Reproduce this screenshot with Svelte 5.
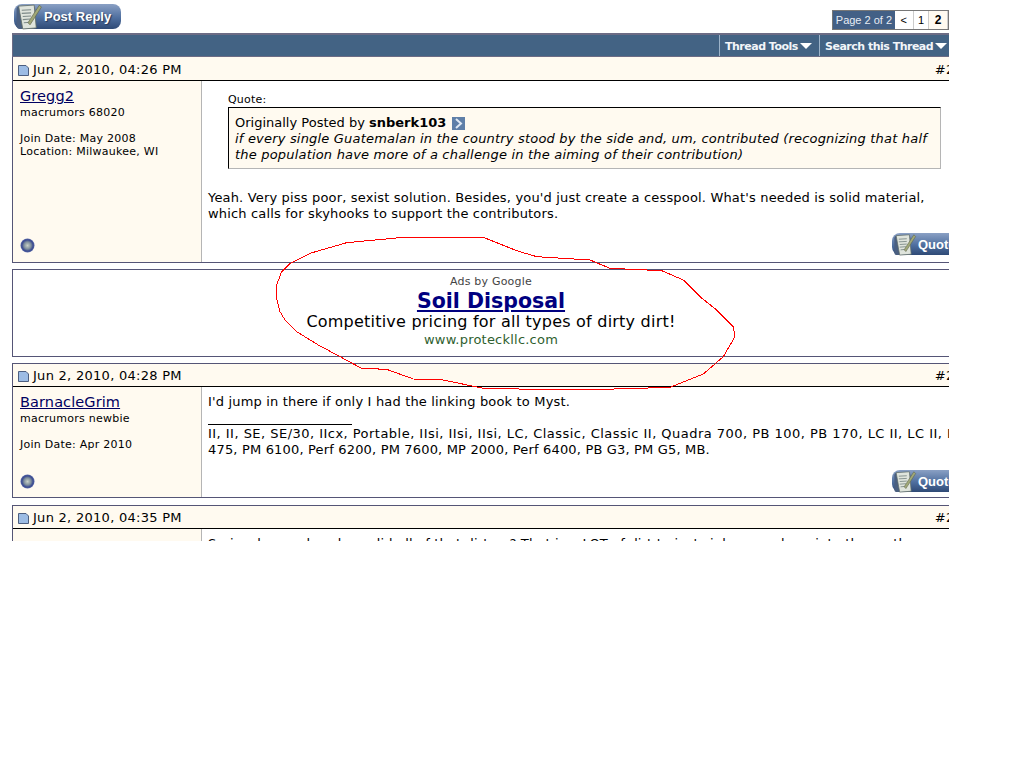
<script>
  const scribble = [[60,100],[35,125],[20,165],[20,205],[30,245],[45,270],[80,305],[145,345],[210,380],[275,415],[350,418],[430,447],[520,450],[640,475],[800,478],[1000,478],[1200,472],[1300,432],[1360,380],[1395,320],[1390,290],[1340,240],[1290,200],[1240,150],[1175,122],[1020,115],[960,90],[800,80],[740,62],[640,22],[400,22],[230,38],[120,70],[60,100]]
    .map(([x, y]) => `${270 + x / 3},${230 + y / 3}`)
    .join(' ');
</script>

{#snippet pad(w, h)}
  <svg class="pad" width={w} height={h} viewBox="0 0 26 26">
    <rect x="1" y="3" width="18" height="22" rx="3" fill="#4a5f80" />
    <path d="M3 3 L18 2 L20 24 L7 25 Z" fill="#dfe4dc" stroke="#5f6b66" stroke-width="0.8" />
    <path d="M6 7l9-.5M6 10l9-.5M7 13l8-.5M7 16l7-.5M8 19l6-.5" stroke="#7d8a88" stroke-width="1" />
    <path d="M12 19 L23 2 L25 4 L14 21 Z" fill="#a0a878" stroke="#5a6048" stroke-width="0.6" />
  </svg>
{/snippet}

{#snippet postHead(date, num)}
  <div class="post-head">
    <svg width="11" height="11" viewBox="0 0 11 11" class="doc">
      <path d="M0.5 0.5 H8 L10.5 3 V10.5 H0.5 Z" fill="#9dbce4" stroke="#4d5f80" />
    </svg>
    <span class="date">{date}</span>
    <span class="num">{num}</span>
  </div>
{/snippet}

{#snippet online()}
  <svg class="online" width="15" height="15" viewBox="0 0 15 15">
    <defs>
      <radialGradient id="orb" cx="0.5" cy="0.5" r="0.5">
        <stop offset="0" stop-color="#c8d0c8" />
        <stop offset="0.5" stop-color="#7f8f9c" />
        <stop offset="0.8" stop-color="#3a4a90" />
        <stop offset="1" stop-color="#5a6aa8" />
      </radialGradient>
    </defs>
    <circle cx="7.5" cy="7.5" r="7" fill="url(#orb)" />
  </svg>
{/snippet}

{#snippet quoteBtn()}
  <div class="quote-btn">
    {@render pad(26, 23)}
    <span>Quote</span>
  </div>
{/snippet}

<div class="page">
  <div class="thread">
    <div class="top-row">
      <div class="reply-btn">
        {@render pad(30, 27)}
        <span>Post Reply</span>
      </div>
      <div class="pager">
        <span class="pager-label">Page 2 of 2</span>
        <span class="pager-cell prev">&lt;</span>
        <span class="pager-cell one">1</span>
        <span class="pager-cell two">2</span>
      </div>
    </div>

    <div class="bar">
      <span class="bar-item tools">Thread Tools <i class="caret"></i></span>
      <span class="bar-item search">Search this Thread <i class="caret"></i></span>
    </div>

    <div class="post first">
      {@render postHead('Jun 2, 2010, 04:26 PM', '#26')}
      <div class="post-row">
        <div class="side">
          <a class="user" href="#u">Gregg2</a>
          <div class="info">macrumors 68020</div>
          <div class="info gap">Join Date: May 2008</div>
          <div class="info">Location: Milwaukee, WI</div>
          {@render online()}
        </div>
        <div class="body">
          <div class="quote-wrap">
            <div class="quote-label">Quote:</div>
            <div class="quote-box">
              <div>Originally Posted by <b>snberk103</b>
                <svg class="goto" width="13" height="13" viewBox="0 0 13 13">
                  <rect width="13" height="13" fill="#5f7fa8" />
                  <path d="M4 2 L9 6.5 L4 11" fill="none" stroke="#dfe8f3" stroke-width="2" />
                </svg>
              </div>
              <em>if every single Guatemalan in the country stood by the side and, um, contributed (recognizing that half<br />the population have more of a challenge in the aiming of their contribution)</em>
            </div>
          </div>
          <p class="msg">Yeah. Very piss poor, sexist solution. Besides, you'd just create a cesspool. What's needed is solid material,<br />which calls for skyhooks to support the contributors.</p>
          {@render quoteBtn()}
        </div>
      </div>
    </div>

    <div class="ad">
      <div class="ad-by">Ads by Google</div>
      <a class="ad-title" href="#ad">Soil Disposal</a>
      <div class="ad-text">Competitive pricing for all types of dirty dirt!</div>
      <div class="ad-url">www.proteckllc.com</div>
    </div>

    <div class="post second">
      {@render postHead('Jun 2, 2010, 04:28 PM', '#27')}
      <div class="post-row">
        <div class="side">
          <a class="user" href="#u">BarnacleGrim</a>
          <div class="info">macrumors newbie</div>
          <div class="info gap">Join Date: Apr 2010</div>
          {@render online()}
        </div>
        <div class="body">
          <p class="msg">I'd jump in there if only I had the linking book to Myst.</p>
          <div class="sig-rule"></div>
          <p class="msg sig"><span class="models">II, II, SE, SE/30, IIcx, Portable, IIsi, IIsi, IIsi, LC, Classic, Classic II, Quadra 700, PB 100, PB 170, LC II, LC II, LC III,</span><br />475, PM 6100, Perf 6200, PM 7600, MP 2000, Perf 6400, PB G3, PM G5, MB.</p>
          {@render quoteBtn()}
        </div>
      </div>
    </div>

    <div class="post third">
      {@render postHead('Jun 2, 2010, 04:35 PM', '#28')}
      <div class="post-row">
        <div class="side">
          <a class="user" href="#u">Ahmed Hill</a>
        </div>
        <div class="body">
          <p class="msg">Seriously people, where did all of that dirt go? That is a LOT of dirt to just sink somewhere into the earth.</p>
        </div>
      </div>
    </div>
  </div>

  <svg class="scribble" width="949" height="541" shape-rendering="crispEdges">
    <polyline points={scribble} fill="none" stroke="#f00" stroke-width="1" />
  </svg>
</div>

<style>
  :global(body) {
    background: #fff;
  }

  .page {
    position: relative;
    width: 949px;
    height: 541px;
    overflow: hidden;
    padding-left: 12px;
    box-sizing: border-box;
    font-family: "DejaVu Sans", Verdana, sans-serif;
    color: #000;
  }

  .thread {
    width: 958px;
    display: flex;
    flex-direction: column;
  }

  .top-row {
    height: 33px;
    display: flex;
    justify-content: space-between;
    align-items: flex-start;
  }

  .reply-btn {
    margin: 4px 0 0 2px;
    width: 107px;
    height: 25px;
    border-radius: 8px;
    background: linear-gradient(#8aa0c4, #4f6f9f 55%, #2f4a76);
    display: flex;
    align-items: center;
  }

  .reply-btn span {
    font: bold 13px "Liberation Sans", Arial, sans-serif;
    color: #fff;
    text-shadow: 1px 1px 1px #2a3a5a;
  }

  .pager {
    margin: 10px 21px 0 0;
    height: 20px;
    display: flex;
    border: 1px solid #777;
    background: #fff;
    font-size: 11px;
    box-sizing: border-box;
    width: 117px;
  }

  .pager span {
    display: flex;
    align-items: center;
    justify-content: center;
  }

  .pager-label {
    width: 63px;
    background: #436086;
    color: #e8edf5;
    font-family: "Liberation Sans", Arial, sans-serif;
  }

  .pager-cell {
    border-right: 1px solid #ccc;
    font-family: "Liberation Sans", Arial, sans-serif;
  }

  .prev { width: 18px; }
  .one { width: 15px; }
  .two { width: 18px; font-weight: bold; font-size: 12px; background: #fffaf0; }

  .bar {
    height: 24px;
    box-sizing: border-box;
    border: 1px solid #6c6c85;
    border-width: 2px 1px 1px;
    background: #436384;
    display: flex;
    justify-content: flex-end;
    align-items: stretch;
    padding-right: 21px;
    color: #f2f5f9;
    font-size: 11px;
    font-weight: bold;
  }

  .bar-item {
    display: flex;
    align-items: center;
    gap: 2px;
    border-left: 1px solid #9db3c9;
    padding: 1px 0 0 5px;
    white-space: nowrap;
    letter-spacing: -0.5px;
  }

  .tools { width: 94px; }
  .search { width: 123px; }

  .caret {
    width: 0;
    height: 0;
    border: 6px solid transparent;
    border-top: 6px solid #fff;
    border-bottom: 0;
  }

  .post {
    flex: none;
    border: 1px solid #555576;
    border-top: 0;
    box-sizing: border-box;
    display: flex;
    flex-direction: column;
  }

  .second, .third {
    border-top: 1px solid #555576;
  }

  .second {
    margin-top: 6px;
  }

  .third {
    margin-top: 7px;
    height: 60px;
    overflow: hidden;
  }

  .post-head {
    height: 24px;
    flex: none;
    box-sizing: border-box;
    background: #fffaf0;
    border-bottom: 1px solid #000;
    display: flex;
    align-items: center;
    padding: 1px 6px 0 5px;
    font-size: 13px;
    letter-spacing: 0.28px;
  }

  .second .post-head, .third .post-head {
    height: 23px;
  }

  .doc {
    margin: 2px 4px 0 0;
  }

  .num {
    margin-left: auto;
  }

  .post-row {
    display: flex;
    flex: none;
  }

  .first .post-row { height: 181px; }
  .second .post-row { height: 110px; }
  .third .post-row { height: 40px; }

  .side {
    width: 189px;
    flex: none;
    box-sizing: border-box;
    background: #fffaf0;
    border-right: 1px solid #b5b5b5;
    padding: 6px 7px 9px;
    display: flex;
    flex-direction: column;
  }

  .second .side {
    padding-bottom: 8px;
  }

  .third .side {
    padding-top: 9px;
  }

  .user {
    font-size: 14.5px;
    line-height: 18px;
    letter-spacing: 0.1px;
    margin-bottom: 1px;
    color: #000060;
    text-decoration: underline;
  }

  .info {
    font-size: 11px;
    line-height: 13px;
    letter-spacing: 0.25px;
  }

  .gap {
    margin-top: 13px;
  }

  .online {
    margin-top: auto;
  }

  .body {
    flex: 1;
    min-width: 0;
    padding: 7px 6px 7px;
    display: flex;
    flex-direction: column;
    font-size: 13px;
    line-height: 16px;
  }

  .second .body {
    padding-bottom: 5px;
  }

  .msg {
    margin: 0;
    white-space: nowrap;
    letter-spacing: 0.17px;
  }

  .sig {
    margin-top: 1px;
  }

  .models {
    letter-spacing: 0.47px;
  }

  .quote-wrap {
    margin: 4px 22px 21px 20px;
  }

  .quote-label {
    font-size: 11px;
    line-height: 15px;
    letter-spacing: 0.2px;
  }

  .quote-box {
    border: 1px solid;
    border-color: #000 #b5b5b5 #b5b5b5 #000;
    background: #fffaf0;
    padding: 7px 6px 5px;
    white-space: nowrap;
  }

  .quote-box em {
    letter-spacing: 0.19px;
  }

  .goto {
    vertical-align: -3px;
    margin-left: 2px;
  }

  .sig-rule {
    width: 144px;
    height: 1px;
    background: #000;
    margin-top: 14px;
  }

  .quote-btn {
    margin-top: auto;
    width: 80px;
    height: 22px;
    flex: none;
    align-self: flex-start;
    margin-left: 684px;
    border-radius: 8px;
    background: linear-gradient(#8aa0c4, #4f6f9f 55%, #2f4a76);
    display: flex;
    align-items: center;
    color: #fff;
    font: bold 13px "Liberation Sans", Arial, sans-serif;
  }

  .ad {
    flex: none;
    margin-top: 6px;
    height: 88px;
    box-sizing: border-box;
    border: 1px solid #555576;
    display: flex;
    flex-direction: column;
    align-items: center;
    padding-top: 4px;
  }

  .ad-by {
    font-size: 11px;
    line-height: 15px;
    letter-spacing: 0.2px;
    color: #444;
  }

  .ad-title {
    font-size: 20.5px;
    line-height: 24px;
    font-weight: bold;
    color: #000080;
  }

  .ad-text {
    font-size: 16px;
    line-height: 18px;
    letter-spacing: 0.22px;
  }

  .ad-url {
    font-size: 13px;
    line-height: 17px;
    letter-spacing: 0.22px;
    color: #2f5f2f;
  }

  .scribble {
    position: absolute;
    left: 0;
    top: 0;
    pointer-events: none;
  }
</style>
